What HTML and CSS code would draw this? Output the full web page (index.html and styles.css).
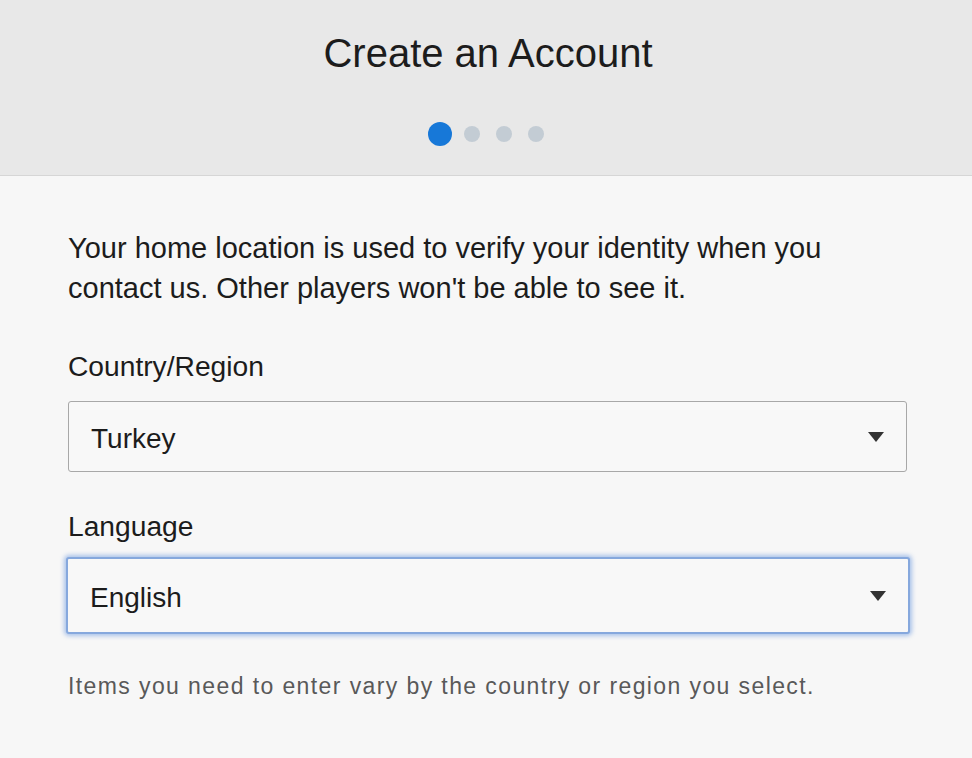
FILE: index.html
```html
<!DOCTYPE html>
<html>
<head>
<meta charset="utf-8">
<link rel="stylesheet" href="styles.css">
</head>
<body>
<header class="head">
  <h1 class="title">Create an Account</h1>
  <div class="dots">
    <span class="dot active"></span>
    <span class="dot"></span>
    <span class="dot"></span>
    <span class="dot"></span>
  </div>
</header>
<main class="content">
  <p class="intro">Your home location is used to verify your identity when you contact us. Other players won't be able to see it.</p>
  <label class="label">Country/Region</label>
  <div class="select">
    <span class="value">Turkey</span>
    <span class="arrow"></span>
  </div>
  <label class="label lang">Language</label>
  <div class="select focused">
    <span class="value">English</span>
    <span class="arrow"></span>
  </div>
  <p class="note">Items you need to enter vary by the country or region you select.</p>
</main>
</body>
</html>
```
FILE: styles.css
```css
* { box-sizing: border-box; }
html, body { margin: 0; padding: 0; }
body {
  background: #f7f7f7;
  font-family: "Liberation Sans", Arial, sans-serif;
  color: #1a1a1a;
  width: 972px;
  height: 758px;
  overflow: hidden;
}
.head {
  height: 176px;
  background: #e8e8e8;
  border-bottom: 1px solid #d6d6d6;
  display: flex;
  flex-direction: column;
  align-items: center;
  padding-top: 30px;
}
.title {
  margin: 0;
  font-weight: normal;
  font-size: 40px;
  line-height: 46px;
  color: #1c1c1c;
  padding-left: 4px;
}
.dots {
  display: flex;
  align-items: center;
  gap: 16px;
  margin-top: 46px;
}
.dot {
  width: 16px;
  height: 16px;
  border-radius: 50%;
  background: #c3ccd4;
}
.dot.active {
  width: 24px;
  height: 24px;
  background: #1778d8;
  margin-right: -4px;
}
.content {
  padding: 52px 64px 0 68px;
}
.intro {
  margin: 0;
  max-width: 820px;
  font-size: 29px;
  line-height: 40px;
  color: #1c1c1c;
}
.label {
  display: block;
  font-size: 28.2px;
  line-height: 32px;
  margin-top: 42px;
  color: #1c1c1c;
}
.label.lang { margin-top: 38px; }
.select {
  margin-top: 19px;
  height: 71px;
  border: 1px solid #a8a8a8;
  border-radius: 3px;
  background: #f8f8f8;
  display: flex;
  align-items: center;
  justify-content: space-between;
  padding: 4px 22px 0 22px;
  width: 839px;
}
.select.focused {
  margin-left: -2px;
  width: 844px;
  height: 77px;
  margin-top: 15px;
  border: 2px solid #86a8dd;
  box-shadow: 0 0 4px 2px rgba(128, 166, 226, 0.65);
}
.value {
  font-size: 28px;
  color: #1c1c1c;
}
.arrow {
  width: 0;
  height: 0;
  border-left: 8px solid transparent;
  border-right: 8px solid transparent;
  border-top: 10px solid #333;
  margin-bottom: 4px;
}
.note {
  margin: 39px 0 0;
  font-size: 23px;
  letter-spacing: 1.4px;
  color: #595959;
}
```
